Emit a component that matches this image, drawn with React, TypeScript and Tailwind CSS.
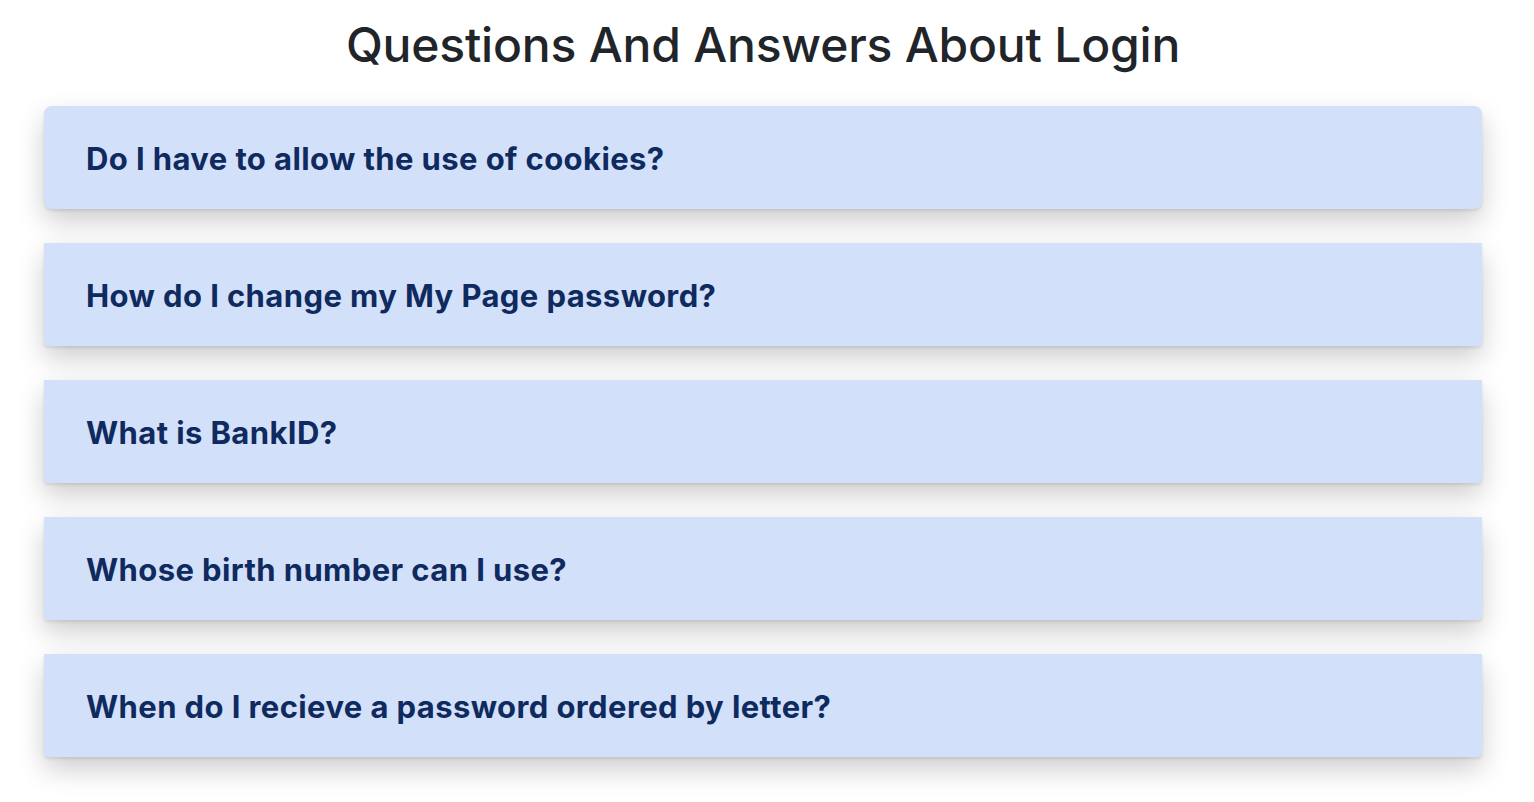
import React from "react";

const questions = [
  "Do I have to allow the use of cookies?",
  "How do I change my My Page password?",
  "What is BankID?",
  "Whose birth number can I use?",
  "When do I recieve a password ordered by letter?",
];

export default function App() {
  return (
    <div
      className="min-h-screen bg-white pl-[44px] pr-[52px] pt-[14px]"
      style={{ fontFamily: "Inter, 'Noto Sans', sans-serif" }}
    >
      <h1 className="text-center text-[48px] font-medium leading-[62px] text-[#212529] tracking-[-0.2px]">
        Questions And Answers About Login
      </h1>
      <div className="mt-[30px] flex flex-col gap-[34px]">
        {questions.map((q, i) => (
          <div
            key={q}
            className={`flex h-[103px] items-center bg-[#d3e0fa] px-[42px] pt-[3px] shadow-[0_2px_3px_rgba(0,0,0,0.09),0_12px_28px_rgba(0,0,0,0.2)] ${
              i === 0 ? "rounded-[8px]" : "rounded-b-[4px]"
            }`}
          >
            <span className="text-[31px] font-bold tracking-[0.4px] text-[#0f2a5e]">{q}</span>
          </div>
        ))}
      </div>
    </div>
  );
}
